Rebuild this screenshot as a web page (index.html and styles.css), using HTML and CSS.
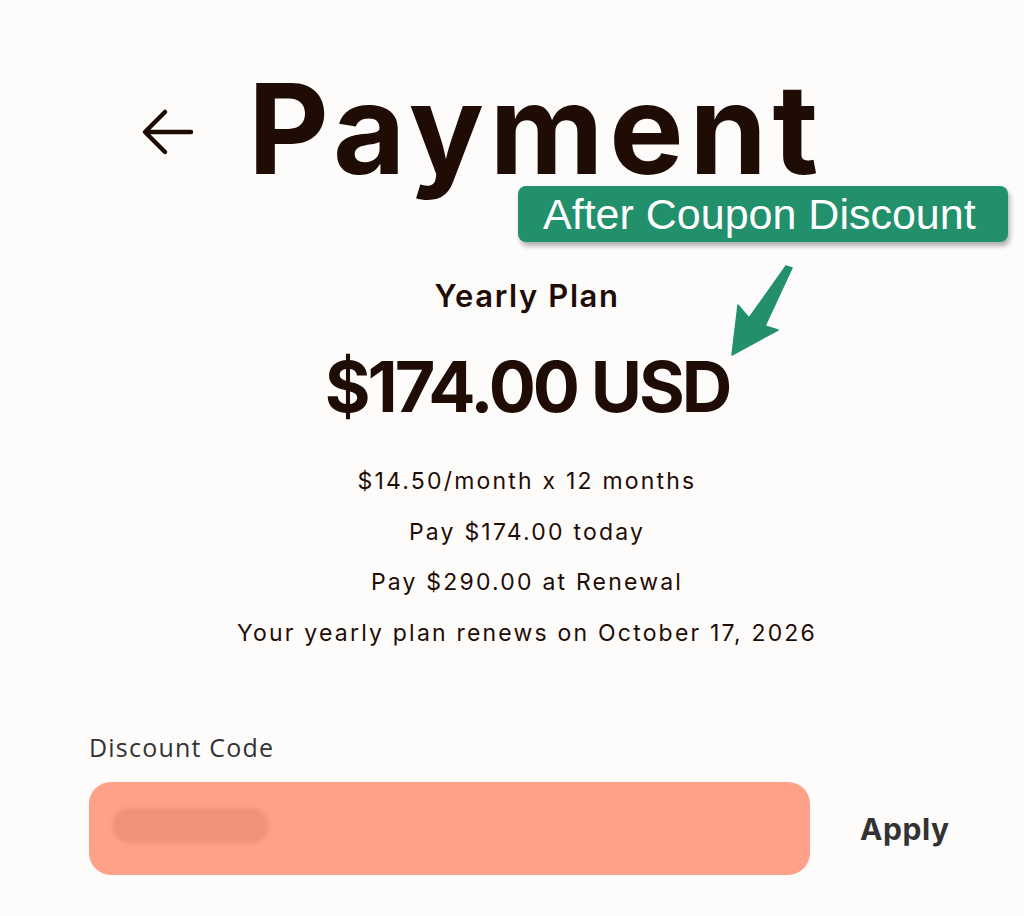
FILE: index.html
```html
<!DOCTYPE html>
<html lang="en">
<head>
<meta charset="utf-8">
<title>Payment</title>
<link rel="stylesheet" href="styles.css">
</head>
<body>
<main class="page">
  <header class="head">
    <button class="back" aria-label="Back">
      <svg width="54" height="50" viewBox="0 0 54 50"><path d="M50 24H5M24 4L4 24l20 20" fill="none" stroke="#1f0c05" stroke-width="4.5" stroke-linecap="round" stroke-linejoin="round"/></svg>
    </button>
    <h1 class="title">Payment</h1>
  </header>
  <section class="plan">
    <h2 class="plan-name">Yearly Plan</h2>
    <p class="price">$174.00 USD</p>
    <ul class="details">
      <li>$14.50/month x 12 months</li>
      <li>Pay $174.00 today</li>
      <li>Pay $290.00 at Renewal</li>
      <li>Your yearly plan renews on October 17, 2026</li>
    </ul>
  </section>
  <section class="discount">
    <label class="label">Discount Code</label>
    <div class="row">
      <div class="input"><span class="blur"></span></div>
      <button class="apply">Apply</button>
    </div>
  </section>
  <div class="badge">After Coupon Discount</div>
  <svg class="pointer" width="75" height="100" viewBox="0 0 75 100"><path d="M61 6 L67 8 L40 66 L53 70 L7 95 L13 45 L24 58 Z" fill="#23906b" stroke="#23906b" stroke-width="1.5" stroke-linejoin="round"/></svg>
</main>
</body>
</html>
```
FILE: styles.css
```css
html, body { margin: 0; padding: 0; background: #fdfcfb; }
body { font-family: Inter, Lato, sans-serif; color: #1f0c05; }
.page { position: relative; width: 1024px; height: 916px; box-sizing: border-box; padding: 79px 0 0 89px; }
.head { display: flex; align-items: center; margin-left: 52px; height: 100px; }
.back { background: none; border: 0; padding: 0; width: 54px; height: 50px; margin-right: 53px; margin-top: 8px; }
.back svg { display: block; }
.title { margin: 0; font-size: 125px; font-weight: 700; letter-spacing: 5.5px; line-height: 100px; }
.plan { width: 876px; display: flex; flex-direction: column; align-items: center; margin-top: 97px; }
.plan-name { margin: 0; font-size: 31px; font-weight: 600; line-height: 40px; letter-spacing: 1.6px; }
.price { margin: 31px 0 0; font-size: 70px; font-weight: 700; line-height: 80px; letter-spacing: -3px; }
.details { list-style: none; padding: 0; margin: 29px 0 0; text-align: center; font-size: 23px; line-height: 50.5px; letter-spacing: 2.2px; }
.discount { margin-top: 74px; width: 876px; }
.label { display: block; font-family: "Open Sans", sans-serif; font-size: 25px; color: #333; line-height: 30px; letter-spacing: 1.2px; }
.row { display: flex; align-items: center; margin-top: 20px; }
.input { width: 721px; height: 93px; border-radius: 22px; background: #ffa088; position: relative; }
.blur { position: absolute; left: 24px; top: 26px; width: 155px; height: 35px; border-radius: 16px; background: #f0917a; filter: blur(2px); }
.apply { margin-left: 50px; background: none; border: 0; padding: 0; font-family: Inter, sans-serif; font-weight: 700; font-size: 30px; letter-spacing: 0.6px; color: #333; }
.badge { position: absolute; left: 518px; top: 186px; width: 490px; height: 56px; box-sizing: border-box; background: #21906b; border-radius: 8px; color: #fff; font-family: "Liberation Sans", Arial, sans-serif; font-size: 43px; line-height: 56px; padding-left: 25px; box-shadow: 2px 4px 5px rgba(0,0,0,0.3); }
.pointer { position: absolute; left: 725px; top: 260px; }
```
